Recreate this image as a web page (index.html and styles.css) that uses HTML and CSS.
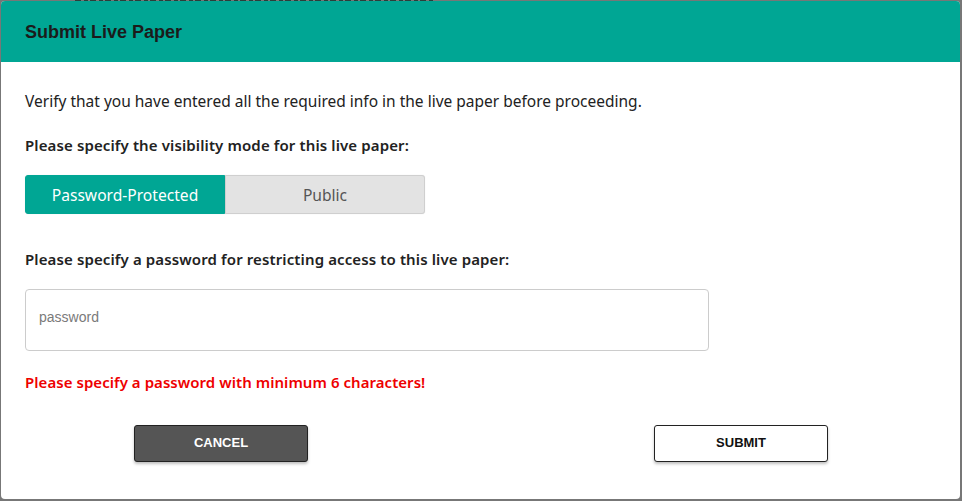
FILE: index.html
```html
<!DOCTYPE html>
<html lang="en">
<head>
<meta charset="utf-8">
<title>Submit Live Paper</title>
<link rel="stylesheet" href="styles.css">
</head>
<body>
<div class="backdrop">
  <div class="behind-strip"></div>
  <div class="modal">
    <div class="modal-header">
      <h2 class="modal-title">Submit Live Paper</h2>
    </div>
    <div class="modal-body">
      <p class="intro">Verify that you have entered all the required info in the live paper before proceeding.</p>
      <p class="label label-first">Please specify the visibility mode for this live paper:</p>
      <div class="toggle">
        <button class="toggle-btn active">Password-Protected</button>
        <button class="toggle-btn">Public</button>
      </div>
      <p class="label label-second">Please specify a password for restricting access to this live paper:</p>
      <input class="password" type="text" placeholder="password">
      <p class="error">Please specify a password with minimum 6 characters!</p>
    </div>
    <div class="modal-footer">
      <button class="btn btn-cancel">CANCEL</button>
      <button class="btn btn-submit">SUBMIT</button>
    </div>
  </div>
</div>
</body>
</html>
```
FILE: styles.css
```css
* { box-sizing: border-box; }
html, body { margin: 0; padding: 0; }
body {
  width: 962px;
  height: 501px;
  overflow: hidden;
  background: #777777;
  font-family: "Noto Sans", "DejaVu Sans", sans-serif;
}
.backdrop {
  position: relative;
  width: 962px;
  height: 501px;
  padding: 1px 2px 2px 1px;
}
.behind-strip {
  position: absolute;
  left: 75px;
  top: 0;
  width: 358px;
  height: 1px;
  background: repeating-linear-gradient(90deg, #2a3f3b 0 6px, #777777 6px 9px, #2a3f3b 9px 13px, #777777 13px 15px);
}
.modal {
  position: relative;
  width: 959px;
  height: 498px;
  background: #ffffff;
  border-radius: 4px;
  overflow: hidden;
  display: flex;
  flex-direction: column;
}
.modal-header {
  height: 61px;
  background: #00a694;
  padding: 1px 24px 0;
  display: flex;
  align-items: center;
}
.modal-title {
  margin: 0;
  font-family: "Liberation Sans", Arial, sans-serif;
  font-weight: bold;
  font-size: 18px;
  color: #1b1b1b;
}
.modal-body {
  padding: 29px 24px 0;
  display: flex;
  flex-direction: column;
  align-items: flex-start;
}
.intro {
  margin: 0;
  font-size: 15.5px;
  line-height: 20px;
  color: #222222;
}
.label {
  margin: 0;
  font-size: 15px;
  line-height: 20px;
  font-weight: 600;
  letter-spacing: 0.12px;
  color: #222222;
}
.label-first { margin-top: 24px; }
.label-second { margin-top: 35px; }
.toggle {
  margin-top: 20px;
  display: flex;
  width: 400px;
  height: 39px;
}
.toggle-btn {
  flex: 1;
  margin: 0;
  font-family: "Noto Sans", "DejaVu Sans", sans-serif;
  font-size: 15.6px;
  border: 1px solid #cfcfcf;
  background: #e3e3e3;
  color: #555555;
  border-radius: 0 3px 3px 0;
  box-shadow: 0 0 1px rgba(0,0,0,0.15);
}
.toggle-btn.active {
  background: #00a694;
  border-color: #00a694;
  color: #ffffff;
  border-radius: 3px 0 0 3px;
}
.password {
  margin-top: 20px;
  width: 684px;
  height: 62px;
  border: 1px solid #cccccc;
  border-radius: 4px;
  padding: 0 13px 6px;
  font-family: "Liberation Sans", Arial, sans-serif;
  font-size: 14px;
  color: #333333;
  outline: none;
}
.password::placeholder { color: #7a7a7a; }
.error {
  margin: 21px 0 0;
  font-size: 15px;
  line-height: 20px;
  font-weight: 600;
  letter-spacing: 0.05px;
  color: #ee0000;
}
.modal-footer {
  margin-top: 33px;
  display: flex;
  justify-content: space-between;
  padding: 0 132px 0 133px;
}
.btn {
  width: 174px;
  height: 37px;
  padding: 0 0 2px;
  border-radius: 3px;
  font-family: "Liberation Sans", Arial, sans-serif;
  font-weight: bold;
  font-size: 13px;
  border: 1px solid #222222;
  box-shadow: 0 2px 3px rgba(0,0,0,0.25);
}
.btn-cancel {
  background: #555555;
  color: #ffffff;
}
.btn-submit {
  background: #ffffff;
  color: #111111;
}
```
